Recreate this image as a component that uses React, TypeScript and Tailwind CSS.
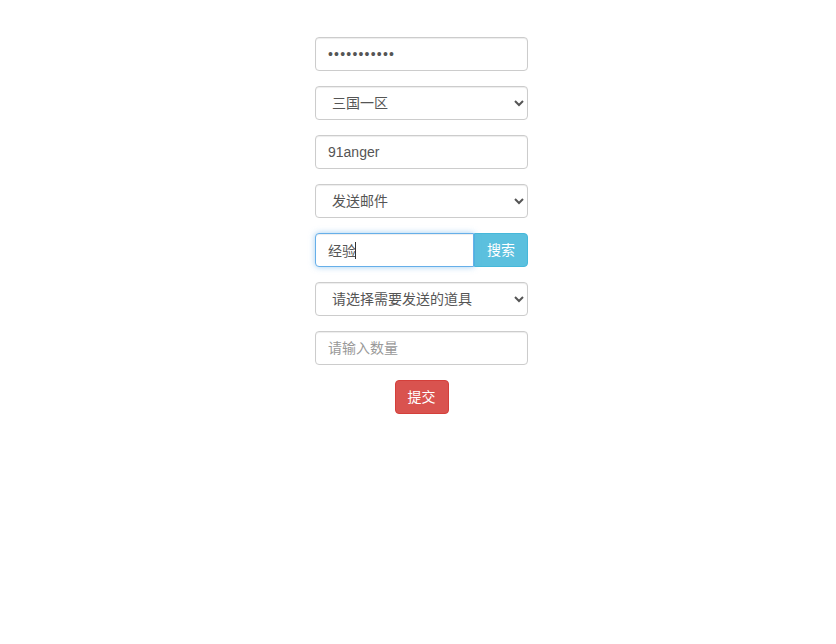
import { useState } from 'react';

const font = { fontFamily: '"Liberation Sans", "Noto Sans CJK SC", sans-serif' };

const field =
  'block w-full h-[34px] px-3 text-[14px] text-[#555] bg-white border border-[#ccc] rounded-[4px] shadow-[inset_0_1px_1px_rgba(0,0,0,0.075)] outline-none placeholder:text-[#999]';

export default function App() {
  const [server, setServer] = useState('1');
  const [action, setAction] = useState('mail');
  const [item, setItem] = useState('');
  const [qty, setQty] = useState('');

  return (
    <div className="min-h-[644px] bg-white flex justify-center pl-[7px] pt-[37px]" style={font}>
      <form className="w-[213px] flex flex-col gap-[15px]" onSubmit={(e) => e.preventDefault()}>
        <input type="password" defaultValue="12345678901" className={`${field} tracking-[1.2px]`} />
        <select value={server} onChange={(e) => setServer(e.target.value)} className={field}>
          <option value="1">三国一区</option>
          <option value="2">三国二区</option>
        </select>
        <input type="text" defaultValue="91anger" className={field} />
        <select value={action} onChange={(e) => setAction(e.target.value)} className={field}>
          <option value="mail">发送邮件</option>
          <option value="other">其他</option>
        </select>
        <div className="flex h-[34px]">
          <div className="relative flex-1">
            <input
              type="text"
              defaultValue="经验"
              className="block w-full h-[34px] px-3 text-[14px] text-[#555] bg-white border border-[#66afe9] rounded-l-[4px] outline-none shadow-[inset_0_1px_1px_rgba(0,0,0,0.075),0_0_6px_rgba(102,175,233,0.6)]"
            />
            <span className="absolute left-[40px] top-[9px] w-px h-[17px] bg-[#333]" />
          </div>
          <button
            type="button"
            className="w-[54px] h-[34px] text-[14px] text-white bg-[#5bc0de] border border-[#46b8da] rounded-r-[4px]"
          >
            搜索
          </button>
        </div>
        <select value={item} onChange={(e) => setItem(e.target.value)} className={field}>
          <option value="">请选择需要发送的道具</option>
          <option value="exp">经验</option>
        </select>
        <input
          type="text"
          placeholder="请输入数量"
          value={qty}
          onChange={(e) => setQty(e.target.value)}
          className={field}
        />
        <div className="flex justify-center">
          <button
            type="submit"
            className="w-[54px] h-[34px] text-[14px] text-white bg-[#d9534f] border border-[#d43f3a] rounded-[4px]"
          >
            提交
          </button>
        </div>
      </form>
    </div>
  );
}
